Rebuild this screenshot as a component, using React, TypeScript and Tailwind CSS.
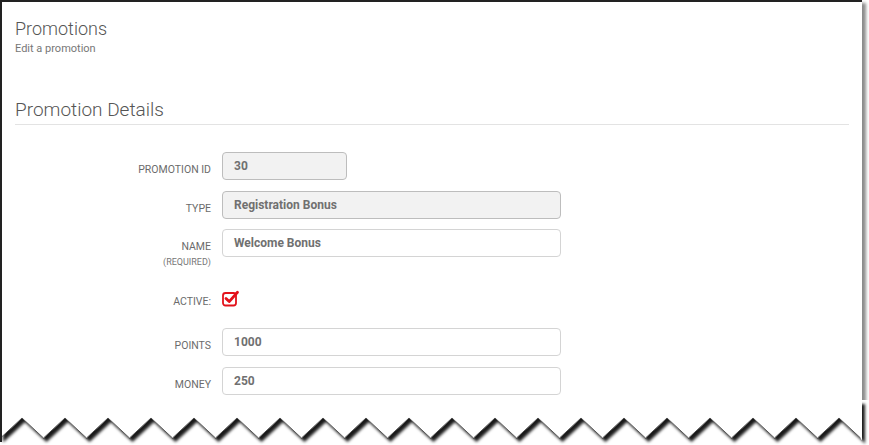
import React from "react"

const font = { fontFamily: "Roboto, 'Liberation Sans', sans-serif" }

function Field({ label, sub, value, disabled, width = "w-[339px]", top }: { label: string; sub?: string; value: string; disabled?: boolean; width?: string; top: string }) {
  return (
    <div className={`flex ${top}`}>
      <div className="w-[197px] pr-[1px] text-right">
        <div className="mt-[11px] text-[10.5px] leading-[14px] text-[#6b6b6b] uppercase">{label}</div>
        {sub && <div className="mt-[3px] text-[9px] leading-[11px] text-[#777]">{sub}</div>}
      </div>
      <div
        className={`ml-[10px] h-[28px] ${width} rounded-[4px] border flex items-center pl-[11px] text-[12px] font-bold text-[#707070] ${
          disabled ? "bg-[#f2f2f2] border-[#bdbdbd]" : "bg-white border-[#d4d4d4]"
        }`}
      >
        {value}
      </div>
    </div>
  )
}

function TornEdge() {
  const pts: string[] = []
  for (let x = -21; x <= 880; x += 43) {
    pts.push(`${x},18`, `${x + 21.5},38`)
  }
  const zig = pts.join(" ")
  return (
    <svg className="absolute left-0 top-[400px]" width="869" height="45" viewBox="0 0 869 45">
      <defs>
        <filter id="sh" x="-5%" y="-50%" width="110%" height="200%">
          <feDropShadow dx="3" dy="4" stdDeviation="1.8" floodColor="#000" floodOpacity="0.9" />
        </filter>
        <clipPath id="cl">
          <rect x="0" y="0" width="862" height="45" />
        </clipPath>
      </defs>
      <rect x="0" y="0" width="869" height="45" fill="#fff" />
      <g filter="url(#sh)">
        <polygon clipPath="url(#cl)" points={`0,0 862,0 862,40 ${pts.slice().reverse().join(" ")} 0,40`} fill="#fff" />
      </g>
      <polyline clipPath="url(#cl)" points={zig} fill="none" stroke="#333" strokeWidth="0.8" />
      <rect x="0" y="0" width="2" height="42" fill="#222" />
    </svg>
  )
}

export default function App() {
  return (
    <div className="relative w-[869px] h-[445px] bg-white overflow-hidden" style={font}>
      <div className="w-[862px] h-[420px] border-t-2 border-l-2 border-[#222] shadow-[4px_3px_3px_rgba(0,0,0,0.45)] bg-white pl-[13px] pr-[13px]">
        <div className="pt-[16px] text-[18px] leading-[22px] font-light text-[#555]">Promotions</div>
        <div className="mt-[2px] text-[11px] leading-[14px] text-[#777]">Edit a promotion</div>
        <div className="mt-[42px] text-[19px] leading-[23px] font-light text-[#555]">Promotion Details</div>
        <div className="mt-[3px] h-[1px] bg-[#e3e3e3] w-[834px]" />

        <Field top="mt-[27px]" label="Promotion ID" value="30" disabled width="w-[125px]" />
        <Field top="mt-[11px]" label="Type" value="Registration Bonus" disabled />
        <Field top="mt-[10px]" label="Name" sub="(REQUIRED)" value="Welcome Bonus" />

        <div className="flex mt-[13px]">
          <div className="w-[197px] pr-[1px] text-right mt-[14px] text-[10.5px] leading-[14px] text-[#6b6b6b]">ACTIVE:</div>
          <svg className="ml-[10px] mt-[8px]" width="18" height="18" viewBox="0 0 18 18">
            <rect x="1" y="4" width="13" height="12.5" rx="2.5" fill="#fff" stroke="#e3121b" strokeWidth="1.8" />
            <path d="M4 9.5 L7.2 12.6 L15.5 3.2" fill="none" stroke="#e3121b" strokeWidth="2.8" strokeLinecap="round" strokeLinejoin="round" />
          </svg>
        </div>

        <Field top="mt-[19px]" label="Points" value="1000" />
        <Field top="mt-[11px]" label="Money" value="250" />
      </div>
      <TornEdge />
    </div>
  )
}
